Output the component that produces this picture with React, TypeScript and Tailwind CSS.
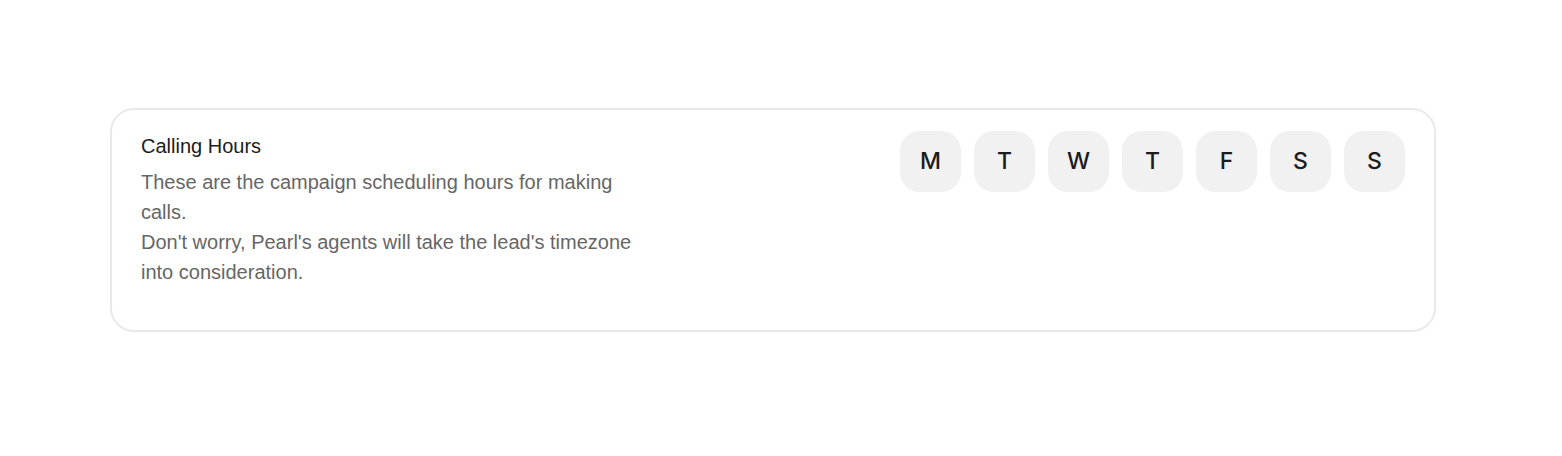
const days = [
  { short: "M", name: "Monday" },
  { short: "T", name: "Tuesday" },
  { short: "W", name: "Wednesday" },
  { short: "T", name: "Thursday" },
  { short: "F", name: "Friday" },
  { short: "S", name: "Saturday" },
  { short: "S", name: "Sunday" },
];

export default function App() {
  return (
    <main className="min-h-screen bg-white pt-27 pr-[126px] pb-31 pl-[110px] font-['Liberation_Sans',Arial,sans-serif]">
      <section className="flex items-start justify-between gap-8 rounded-3xl border-2 border-[#e9e9e9] px-[29px] pt-[21px] pb-[43px]">
        <div className="max-w-[500px] text-xl leading-[30px]">
          <h2 className="text-[#1c1c1c]">Calling Hours</h2>
          <p className="mt-1.5 text-[#666666]">
            These are the campaign scheduling hours for making calls.
            <br />
            Don't worry, Pearl's agents will take the lead's timezone into consideration.
          </p>
        </div>
        <div className="flex gap-[13px]" role="group" aria-label="Calling days">
          {days.map((day) => (
            <button
              key={day.name}
              type="button"
              aria-label={day.name}
              className="size-[61px] rounded-[20px] bg-[#f1f1f1] font-['Inter',sans-serif] text-[23px] font-medium text-[#1c1c1c]"
            >
              {day.short}
            </button>
          ))}
        </div>
      </section>
    </main>
  );
}
